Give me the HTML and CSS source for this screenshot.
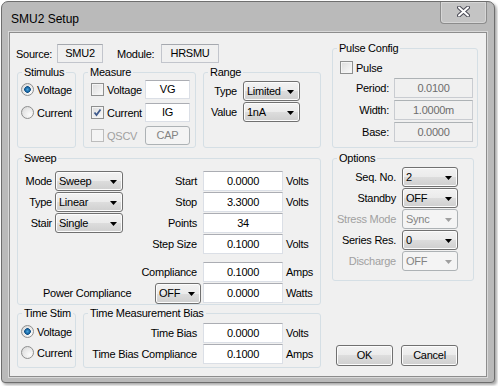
FILE: index.html
```html
<!DOCTYPE html>
<html lang="en">
<head>
    <meta charset="UTF-8">
    <meta name="viewport" content="width=device-width, initial-scale=1.0">
    <title>SMU2 Setup</title>
    <link rel="stylesheet" href="styles.css">
</head>
<body>
    <div class="window">
        <div class="titlebar">
            <span class="title">SMU2 Setup</span>
            <div class="close-btn">
                <svg width="13" height="11" viewBox="0 0 13 11">
                    <path d="M2 1.5 L11 9.5 M11 1.5 L2 9.5" stroke="#4a4a55" stroke-width="4" stroke-linecap="round"/>
                    <path d="M2 1.5 L11 9.5 M11 1.5 L2 9.5" stroke="#ffffff" stroke-width="2" stroke-linecap="round"/>
                </svg>
            </div>
        </div>
        <div class="client">
            <div class="col-left">
                <div class="source-row">
                    <span class="src-label">Source:</span>
                    <span class="readonly src-box">SMU2</span>
                    <span class="src-label mod-label">Module:</span>
                    <span class="readonly mod-box">HRSMU</span>
                </div>

                <div class="group-row top-groups">
                    <div class="group stimulus">
                        <span class="caption">Stimulus</span>
                        <div class="opt-row"><span class="radio checked"></span>Voltage</div>
                        <div class="opt-row"><span class="radio"></span>Current</div>
                    </div>
                    <div class="group measure">
                        <span class="caption">Measure</span>
                        <div class="opt-row"><span class="check"></span>Voltage</div>
                        <span class="edit">VG</span>
                        <div class="opt-row"><span class="check"><svg width="11" height="11" viewBox="0 0 11 11"><path d="M2.5 5.5 L4.5 8 L8.5 2.5" fill="none" stroke="#3f5a8c" stroke-width="1.8"/></svg></span>Current</div>
                        <span class="edit">IG</span>
                        <div class="opt-row disabled"><span class="check"></span>QSCV</div>
                        <span class="button disabled">CAP</span>
                    </div>
                    <div class="group range">
                        <span class="caption">Range</span>
                        <span class="lbl">Type</span>
                        <span class="combo">Limited</span>
                        <span class="lbl">Value</span>
                        <span class="combo">1nA</span>
                    </div>
                </div>

                <div class="group sweep">
                    <span class="caption">Sweep</span>
                    <span class="lbl">Mode</span>
                    <span class="combo">Sweep</span>
                    <span class="lbl wide">Start</span>
                    <span class="edit">0.0000</span>
                    <span class="unit">Volts</span>

                    <span class="lbl">Type</span>
                    <span class="combo">Linear</span>
                    <span class="lbl wide">Stop</span>
                    <span class="edit">3.3000</span>
                    <span class="unit">Volts</span>

                    <span class="lbl">Stair</span>
                    <span class="combo">Single</span>
                    <span class="lbl wide">Points</span>
                    <span class="edit">34</span>
                    <span class="unit"></span>

                    <span class="lbl wide span-step">Step Size</span>
                    <span class="edit">0.1000</span>
                    <span class="unit">Volts</span>

                    <span class="spacer"></span>

                    <span class="lbl wide span-step">Compliance</span>
                    <span class="edit">0.1000</span>
                    <span class="unit">Amps</span>

                    <div class="power-row">
                        <span class="power-label">Power Compliance</span>
                        <span class="combo power-combo">OFF</span>
                    </div>
                    <span class="edit">0.0000</span>
                    <span class="unit">Watts</span>
                </div>

                <div class="group-row bottom-groups">
                    <div class="group time-stim">
                        <span class="caption">Time Stim</span>
                        <div class="opt-row"><span class="radio checked"></span>Voltage</div>
                        <div class="opt-row"><span class="radio"></span>Current</div>
                    </div>
                    <div class="group time-bias">
                        <span class="caption">Time Measurement Bias</span>
                        <span class="lbl wide">Time Bias</span>
                        <span class="edit">0.0000</span>
                        <span class="unit">Volts</span>
                        <span class="lbl wide">Time Bias Compliance</span>
                        <span class="edit">0.1000</span>
                        <span class="unit">Amps</span>
                    </div>
                </div>
            </div>

            <div class="col-right">
                <div class="group pulse">
                    <span class="caption">Pulse Config</span>
                    <div class="opt-row pulse-check"><span class="check"></span>Pulse</div>
                    <div class="pulse-grid">
                        <span class="lbl">Period:</span>
                        <span class="edit disabled">0.0100</span>
                        <span class="lbl">Width:</span>
                        <span class="edit disabled">1.0000m</span>
                        <span class="lbl">Base:</span>
                        <span class="edit disabled">0.0000</span>
                    </div>
                </div>

                <div class="group options">
                    <span class="caption">Options</span>
                    <span class="lbl">Seq. No.</span>
                    <span class="combo">2</span>
                    <span class="lbl">Standby</span>
                    <span class="combo">OFF</span>
                    <span class="lbl disabled">Stress Mode</span>
                    <span class="combo disabled">Sync</span>
                    <span class="lbl">Series Res.</span>
                    <span class="combo">0</span>
                    <span class="lbl disabled">Discharge</span>
                    <span class="combo disabled">OFF</span>
                </div>

                <div class="buttons">
                    <span class="button">OK</span>
                    <span class="button">Cancel</span>
                </div>
            </div>
        </div>
    </div>
</body>
</html>
```

FILE: styles.css
```css
* {
    box-sizing: border-box;
}
body {
    margin: 0;
    width: 498px;
    height: 386px;
    overflow: hidden;
    background: #ffffff;
    font-family: "Liberation Sans", Arial, sans-serif;
    font-size: 11px;
    letter-spacing: -0.25px;
    color: #000000;
}

/* window frame */
.window {
    margin: 1px 0 0 1px;
    width: 494px;
    background: #bababa;
    border: 1px solid #6e6e6e;
    border-radius: 7px 7px 4px 4px;
    box-shadow: 2px 2px 3px rgba(0, 0, 0, 0.35);
    padding: 0 7px 5px 7px;
}
.titlebar {
    height: 30px;
    display: flex;
    align-items: flex-start;
}
.title {
    padding: 9px 0 0 2px;
    font-size: 12px;
    line-height: 16px;
    letter-spacing: 0;
    color: #000000;
}
.close-btn {
    margin-left: auto;
    width: 47px;
    height: 22px;
    border: 1px solid #8c8c8c;
    border-top: none;
    border-radius: 0 0 4px 4px;
    background: #c4c4c4;
    box-shadow: inset 0 0 0 1px #d6d6d6;
    display: flex;
    align-items: center;
    justify-content: center;
    padding-bottom: 2px;
}

/* client area */
.client {
    height: 345px;
    background: #f0f0f0;
    border: 1px solid #8d8d8d;
    box-shadow: 0 0 0 1px #d9d9d9;
    display: flex;
    gap: 11px;
    padding: 0 8px 0 7px;
}
.col-left {
    width: 304px;
    padding-top: 11px;
    display: flex;
    flex-direction: column;
}
.col-right {
    width: 146px;
    padding-top: 15px;
    display: flex;
    flex-direction: column;
}

/* source row */
.source-row {
    display: flex;
    align-items: center;
    height: 19px;
}
.src-label {
    width: 41px;
    margin-left: -1px;
}
.mod-label {
    width: 44px;
    margin-left: 14px;
}
.readonly {
    height: 19px;
    line-height: 17px;
    text-align: center;
    border: 1px solid #c2c5cc;
    border-top-color: #a5a8ae;
    background: #f0f0f0;
}
.src-box {
    width: 46px;
}
.mod-box {
    width: 58px;
}

/* group boxes */
.group-row {
    display: flex;
    gap: 7px;
}
.group {
    position: relative;
    border: 1px solid #d5dfe5;
    border-radius: 3px;
}
.caption {
    position: absolute;
    top: -7px;
    left: 4px;
    padding: 0 2px;
    line-height: 13px;
    background: #f0f0f0;
    white-space: nowrap;
}
.top-groups {
    margin-top: 9px;
    height: 76px;
}
.stimulus,
.time-stim {
    width: 59px;
    padding: 7px 0 0 3px;
    display: grid;
    grid-auto-rows: 19px;
    row-gap: 4px;
    align-content: start;
}
.time-stim {
    padding-top: 8px;
    row-gap: 2px;
}
.measure {
    width: 113px;
    padding: 7px 0 0 7px;
    display: grid;
    grid-template-columns: 54px 45px;
    grid-auto-rows: 19px;
    row-gap: 4px;
    align-content: start;
}
.range {
    width: 118px;
    padding-top: 8px;
    display: grid;
    grid-template-columns: 39px 57px;
    grid-auto-rows: 20px;
    row-gap: 1px;
    align-content: start;
}

.opt-row {
    display: flex;
    align-items: center;
    gap: 3px;
    white-space: nowrap;
}
.disabled {
    color: #a0a0a0;
}
.lbl {
    text-align: right;
    padding-right: 6px;
    align-self: center;
    white-space: nowrap;
    padding-bottom: 1px;
}

/* controls */
.radio {
    width: 13px;
    height: 13px;
    border-radius: 50%;
    border: 1px solid #8e8f8f;
    background: radial-gradient(circle at 70% 70%, #fbfbfb 0%, #e6e6e6 60%, #d0d0d0 100%);
    flex: none;
}
.radio.checked {
    background:
        radial-gradient(circle at 50% 50%, #4aa6e0 0, #1e6da8 2px, #0e4f86 3px, transparent 3.6px),
        radial-gradient(circle at 70% 70%, #fbfbfb 0%, #e6e6e6 60%, #d0d0d0 100%);
}
.check {
    width: 13px;
    height: 13px;
    border: 1px solid #8e8f8f;
    background: linear-gradient(135deg, #dcdcdc, #fbfbfb);
    box-shadow: inset 0 0 0 1px #f4f4f4;
    flex: none;
    display: flex;
    align-items: center;
    justify-content: center;
}
.disabled .check {
    border-color: #bcbcbc;
    background: #f4f4f4;
}
.edit {
    height: 19px;
    line-height: 17px;
    background: #ffffff;
    border: 1px solid #dbdfe6;
    border-top-color: #abadb3;
    text-align: center;
    white-space: nowrap;
}
.edit.disabled {
    background: #f0f0f0;
    border-color: #c9ccd1;
    border-top-color: #adb2b5;
    color: #6d6d6d;
}
.button {
    height: 21px;
    line-height: 19px;
    text-align: center;
    border: 1px solid #707070;
    border-radius: 3px;
    background: linear-gradient(#f2f2f2 0%, #ebebeb 50%, #dddddd 50%, #cfcfcf 100%);
    box-shadow: inset 0 0 0 1px #fcfcfc;
}
.button.disabled {
    height: 19px;
    line-height: 17px;
    border-color: #adb2b5;
    background: #f4f4f4;
    box-shadow: none;
    color: #838383;
}
.combo {
    position: relative;
    height: 20px;
    line-height: 19px;
    padding-left: 3px;
    border: 1px solid #707070;
    border-radius: 3px;
    background: linear-gradient(#f2f2f2 0%, #ebebeb 50%, #dddddd 50%, #cfcfcf 100%);
    box-shadow: inset 0 0 0 1px #fcfcfc;
    white-space: nowrap;
}
.combo::after {
    content: "";
    position: absolute;
    right: 5px;
    top: 8px;
    width: 7px;
    height: 4px;
    background: #000000;
    clip-path: polygon(0 0, 100% 0, 50% 100%);
}
.combo.disabled {
    border-color: #adb2b5;
    background: #f4f4f4;
    box-shadow: none;
    color: #838383;
}
.combo.disabled::after {
    background: #a0a0a0;
}

/* sweep */
.sweep {
    margin-top: 10px;
    height: 147px;
    padding-top: 12px;
    display: grid;
    grid-template-columns: 37px 68px 80px 80px 37px;
    grid-template-rows: repeat(4, 20px) 6px 20px 21px;
    row-gap: 1px;
}
.sweep .lbl {
    padding-right: 3px;
}
.sweep .lbl.wide,
.time-bias .lbl.wide {
    padding-right: 6px;
}
.span-step {
    grid-column: 1 / 4;
}
.spacer {
    grid-column: 1 / -1;
}
.unit {
    padding-left: 3px;
    align-self: center;
    padding-bottom: 1px;
}
.sweep .edit,
.time-bias .edit {
    height: 20px;
    line-height: 18px;
}
.power-row {
    grid-column: 1 / 4;
    display: flex;
    align-items: center;
    justify-content: space-between;
    padding-left: 25px;
    padding-right: 4px;
}
.power-label {
    padding-bottom: 2px;
}
.power-combo {
    width: 46px;
    height: 21px;
    margin-right: -2px;
}

.bottom-groups {
    margin-top: 8px;
    height: 55px;
}
.time-bias {
    width: 238px;
    padding-top: 9px;
    display: grid;
    grid-template-columns: 119px 80px 37px;
    grid-auto-rows: 20px;
    row-gap: 1px;
    align-content: start;
}

/* right column */
.pulse {
    height: 100px;
}
.pulse-check {
    margin: 12px 0 0 7px;
    height: 13px;
}
.pulse-grid {
    margin-top: 4px;
    display: grid;
    grid-template-columns: 61px 79px;
    grid-auto-rows: 20px;
    row-gap: 2px;
}
.pulse-grid .lbl {
    padding-right: 5px;
}
.pulse-grid .edit {
    height: 20px;
    line-height: 18px;
}
.options {
    margin-top: 10px;
    width: 142px;
    height: 123px;
    padding-top: 8px;
    display: grid;
    grid-template-columns: 69px 56px;
    grid-auto-rows: 20px;
    row-gap: 1px;
    align-content: start;
}
.buttons {
    margin-top: 64px;
    padding-left: 4px;
    display: flex;
    gap: 8px;
}
.buttons .button {
    width: 57px;
}
```
